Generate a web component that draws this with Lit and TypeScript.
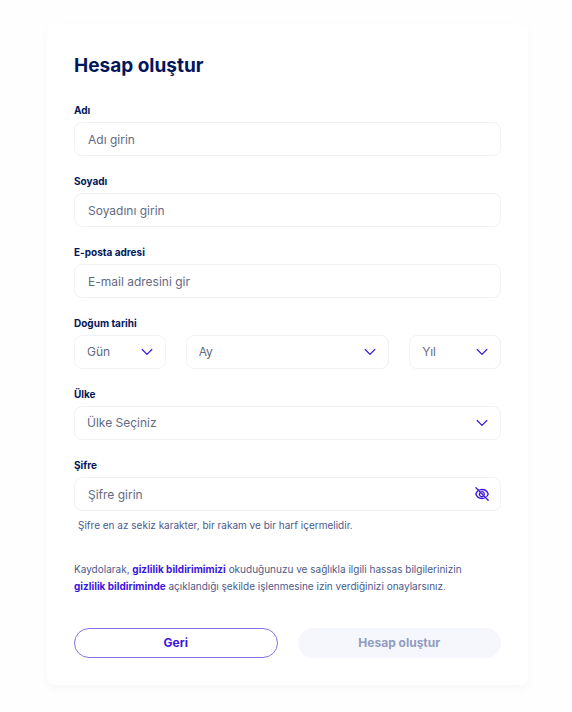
import { LitElement, html, css } from "lit";
import { customElement, state } from "lit/decorators.js";

const chevron = html`<svg class="chevron" viewBox="0 0 12 12" aria-hidden="true">
  <path d="M1.2 3.5 6 8.3l4.8-4.8" />
</svg>`;

const range = (from: number, to: number) =>
  Array.from({ length: to - from + 1 }, (_, i) => String(from + i));

const months = [
  "Ocak", "Şubat", "Mart", "Nisan", "Mayıs", "Haziran",
  "Temmuz", "Ağustos", "Eylül", "Ekim", "Kasım", "Aralık",
];

@customElement("app-root")
export class AppRoot extends LitElement {
  @state() private showPassword = false;

  static styles = css`
    :host {
      display: block;
      box-sizing: border-box;
      padding: 24px 44px 27px 47px;
      background: #fefefe;
      font-family: Inter, "Noto Sans", sans-serif;
      color: #02175a;
    }
    * {
      box-sizing: border-box;
    }
    .card {
      padding: 30px 27px 27px;
      border-radius: 8px;
      background: #fff;
      box-shadow: 0 4px 8px rgba(60, 70, 160, 0.04);
    }
    .title {
      margin: 0 0 24px;
      font-size: 19px;
      line-height: 24px;
      font-weight: 700;
    }
    .form {
      display: flex;
      flex-direction: column;
    }
    .fields {
      display: flex;
      flex-direction: column;
      gap: 17px;
    }
    .field {
      display: flex;
      flex-direction: column;
      gap: 4px;
      min-width: 0;
    }
    .label {
      font-size: 10px;
      line-height: 16px;
      font-weight: 700;
    }
    .box {
      position: relative;
      display: flex;
      align-items: center;
      height: 34px;
      border: 1px solid #f1f2f6;
      border-radius: 8px;
      background: #fff;
    }
    .control {
      flex: 1;
      width: 100%;
      min-width: 0;
      height: 100%;
      margin: 0;
      padding: 0 13px;
      border: 0;
      border-radius: 7px;
      outline-color: #3a16dc;
      background: none;
      appearance: none;
      font: 12px/16px Inter, "Noto Sans", sans-serif;
      color: #626a84;
    }
    .select {
      padding: 0 32px 0 12px;
    }
    .control::placeholder {
      color: #626a84;
      opacity: 1;
    }
    .chevron {
      position: absolute;
      right: 12px;
      width: 12px;
      height: 12px;
      fill: none;
      stroke: #3a16dc;
      stroke-width: 1.2;
      stroke-linecap: round;
      stroke-linejoin: round;
      pointer-events: none;
    }
    .date {
      display: grid;
      grid-template-columns: 9fr 20fr 9fr;
      gap: 20px;
    }
    .toggle {
      display: flex;
      margin-right: 11px;
      padding: 0;
      border: 0;
      background: none;
      cursor: pointer;
    }
    .eye {
      width: 14px;
      height: 14px;
      fill: none;
      stroke: #3a16dc;
      stroke-width: 1.3;
      stroke-linecap: round;
    }
    .hint {
      margin: 2px 4px 0;
      font-size: 10px;
      line-height: 16px;
      color: #4c5a8a;
    }
    .terms {
      margin: 28px 0 33px;
      padding-right: 24px;
      font-size: 10px;
      line-height: 17px;
      color: #4c5a8a;
    }
    .link {
      color: #3a16dc;
      font-weight: 700;
      text-decoration: none;
    }
    .actions {
      display: grid;
      grid-template-columns: 1fr 1fr;
      gap: 20px;
    }
    .button {
      height: 30px;
      padding: 0 16px;
      border: 1px solid #8470e2;
      border-radius: 15px;
      background: #fff;
      font: 700 12px/16px Inter, "Noto Sans", sans-serif;
      color: #3a16dc;
    }
    .button:disabled {
      border-color: #f5f7fc;
      background: #f5f7fc;
      color: #919dc0;
    }
  `;

  private text(id: string, label: string, placeholder: string, type = "text") {
    return html`<div class="field">
      <label class="label" for=${id}>${label}</label>
      <div class="box">
        <input class="control" id=${id} type=${type} placeholder=${placeholder} />
      </div>
    </div>`;
  }

  private select(id: string, first: string, options: string[], name?: string) {
    return html`<div class="box">
      <select class="control select" id=${id} aria-label=${name ?? first}>
        <option value="">${first}</option>
        ${options.map((o) => html`<option>${o}</option>`)}
      </select>
      ${chevron}
    </div>`;
  }

  render() {
    return html`<main class="card">
      <h1 class="title">Hesap oluştur</h1>
      <form class="form" @submit=${(e: Event) => e.preventDefault()}>
        <div class="fields">
          ${this.text("first", "Adı", "Adı girin")}
          ${this.text("last", "Soyadı", "Soyadını girin")}
          ${this.text("email", "E-posta adresi", "E-mail adresini gir", "email")}
          <div class="field" role="group" aria-labelledby="birth">
            <label class="label" id="birth" for="day">Doğum tarihi</label>
            <div class="date">
              ${this.select("day", "Gün", range(1, 31))}
              ${this.select("month", "Ay", months)}
              ${this.select("year", "Yıl", range(1930, 2010))}
            </div>
          </div>
          <div class="field">
            <label class="label" for="country">Ülke</label>
            ${this.select("country", "Ülke Seçiniz", ["Türkiye", "Almanya"], "Ülke")}
          </div>
          <div class="field">
            <label class="label" for="password">Şifre</label>
            <div class="box">
              <input
                class="control"
                id="password"
                type=${this.showPassword ? "text" : "password"}
                placeholder="Şifre girin"
                aria-describedby="hint"
              />
              <button
                class="toggle"
                type="button"
                aria-label="Şifreyi göster"
                @click=${() => (this.showPassword = !this.showPassword)}
              >
                <svg class="eye" viewBox="0 0 14 14" aria-hidden="true">
                  <path d="M1 .8l12.200 12.400" />
                  <path d="M4.800 2.900C5.500 2.600 6.300 2.500 7 2.500c3 0 5.300 2 6.200 4.500-.3.900-.8 1.700-1.500 2.400" />
                  <path d="M2.700 4C1.800 4.800 1.200 5.800.8 7c.9 2.500 3.200 4.500 6.200 4.500 1.100 0 2.100-.2 3-.7" />
                  <path d="M5.100 5.700a2.300 2.300 0 0 0 3.200 3.300M6.800 4.700a2.300 2.300 0 0 1 2.500 2.600" />
                </svg>
              </button>
            </div>
            <p class="hint" id="hint">
              Şifre en az sekiz karakter, bir rakam ve bir harf içermelidir.
            </p>
          </div>
        </div>
        <p class="terms">
          Kaydolarak, <a class="link" href="#privacy">gizlilik bildirimimizi</a> okuduğunuzu ve
          sağlıkla ilgili hassas bilgilerinizin
          <a class="link" href="#privacy">gizlilik bildiriminde</a> açıklandığı şekilde
          işlenmesine izin verdiğinizi onaylarsınız.
        </p>
        <div class="actions">
          <button class="button" type="button">Geri</button>
          <button class="button" type="submit" disabled>Hesap oluştur</button>
        </div>
      </form>
    </main>`;
  }
}
